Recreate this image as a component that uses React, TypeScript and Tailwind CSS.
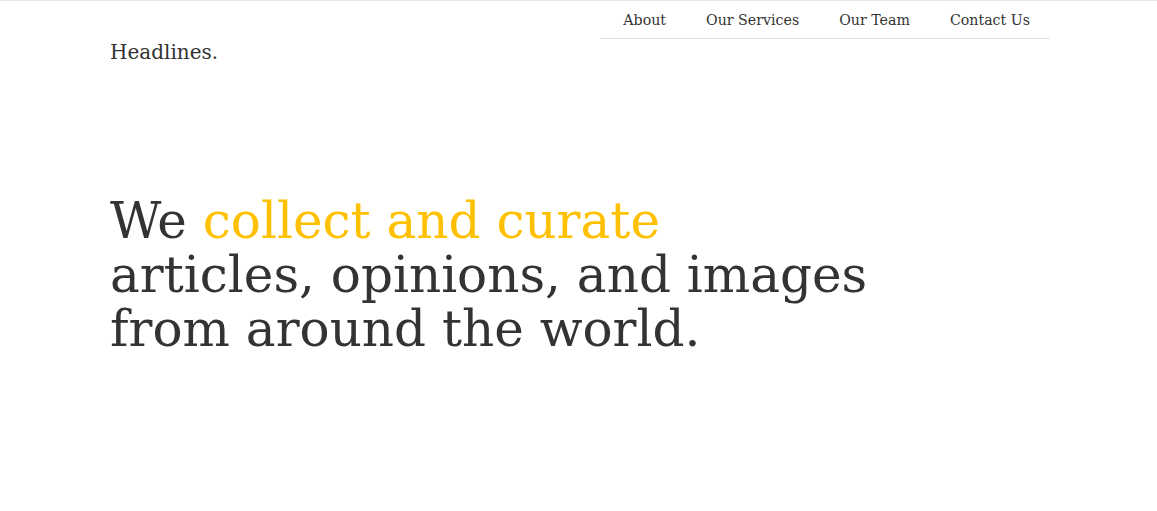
export default function App() {
  return (
    <div
      className="min-h-[511px] bg-white border-t border-[#e5e5e5] text-[#333333]"
      style={{ fontFamily: '"DejaVu Serif", "Liberation Serif", serif' }}
    >
      <div className="w-[940px] ml-[110px]">
        {/* Header */}
        <header className="flex justify-between">
          <div className="pt-[41px] text-[20px] leading-none">Headlines.</div>
          <nav className="w-[450px] border-b border-[#e0e0e0] flex justify-end h-[38px] items-center pt-[2px]">
            <a className="px-5 text-[14.2px]">About</a>
            <a className="px-5 text-[14.2px]">Our Services</a>
            <a className="px-5 text-[14.2px]">Our Team</a>
            <a className="px-5 text-[14.2px]">Contact Us</a>
          </nav>
        </header>

        {/* Hero */}
        <h1 className="mt-[132px] text-[50px] leading-[54px]">
          We <span className="text-[#ffc000]">collect and curate</span>
          <br />
          articles, opinions, and images
          <br />
          from around the world.
        </h1>
      </div>
    </div>
  );
}
